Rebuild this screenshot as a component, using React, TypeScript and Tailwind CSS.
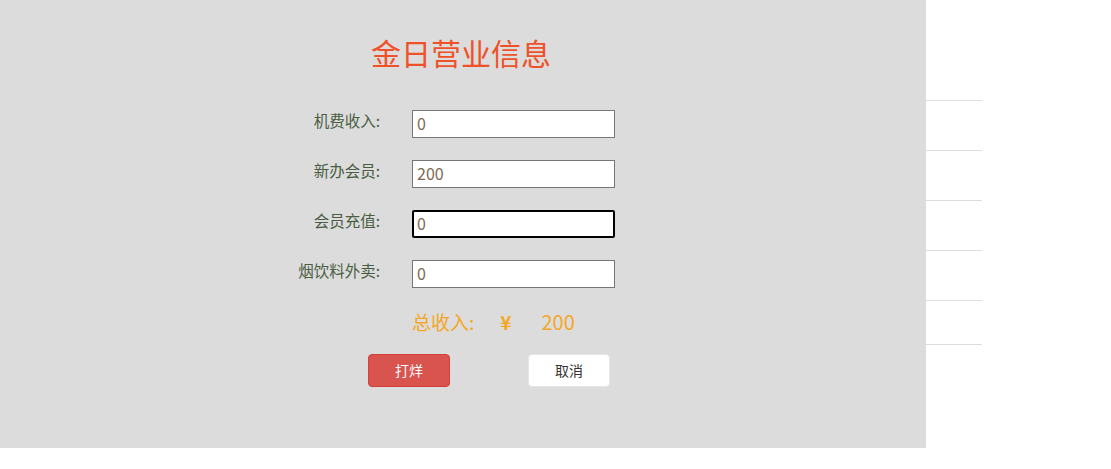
import { useState } from 'react';

const fields = [
  { label: '机费收入:', value: '0' },
  { label: '新办会员:', value: '200' },
  { label: '会员充值:', value: '0', focus: true },
  { label: '烟饮料外卖:', value: '0' },
];

function App() {
  const [form, setForm] = useState(fields.map((f) => f.value));

  return (
    <div
      className="flex w-[1111px] h-[469px] bg-white overflow-hidden"
      style={{ fontFamily: '"Noto Sans CJK SC", "Liberation Sans", sans-serif' }}
    >
      <div className="w-[926px] h-[448px] bg-[#dcdcdc] flex flex-col shrink-0">
        <h1 className="mt-[31px] text-center text-[30px] leading-[42px] text-[#ef5128] pr-[4px]">
          金日营业信息
        </h1>
        <div className="mt-[26px] pl-[280px] flex flex-col">
          {fields.map((f, i) => (
            <div key={f.label} className="flex items-center h-[50px]">
              <label className="w-[100px] text-right text-[15.5px] leading-[20px] text-[#4a5c42] -mt-[8px]">
                {f.label}
              </label>
              <input
                value={form[i]}
                onChange={(e) => {
                  const next = [...form];
                  next[i] = e.target.value;
                  setForm(next);
                }}
                className={
                  f.focus
                    ? 'ml-[32px] w-[203px] h-[28px] bg-white border-2 border-black rounded-[2px] px-[3px] pb-[3px] text-[16px] text-[#7d6a52] outline-none'
                    : 'ml-[32px] w-[203px] h-[28px] bg-white border border-[#767676] px-[4px] pb-[3px] text-[16px] text-[#7d6a52] outline-none'
                }
              />
            </div>
          ))}
          <div className="flex items-center h-[46px] ml-[132px] text-[19px] text-[#f5a623]">
            <span>总收入:</span>
            <span className="ml-[26px] font-bold">¥</span>
            <span className="ml-[30px] text-[20px]">200</span>
          </div>
        </div>
        <div className="mt-[9px] flex pl-[368px]">
          <button
            type="button"
            className="w-[82px] h-[33px] rounded-[4px] bg-[#d9534f] border border-[#d43f3a] text-white text-[14px]"
          >
            打烊
          </button>
          <button
            type="button"
            className="ml-[78px] w-[82px] h-[33px] rounded-[4px] bg-white border border-[#e6e6e6] text-[#333] text-[14px]"
          >
            取消
          </button>
        </div>
      </div>
      <div className="w-[56px] flex flex-col">
        <div className="h-[101px] border-b border-[#dddddd]" />
        <div className="h-[50px] border-b border-[#dddddd]" />
        <div className="h-[50px] border-b border-[#dddddd]" />
        <div className="h-[50px] border-b border-[#dddddd]" />
        <div className="h-[50px] border-b border-[#dddddd]" />
        <div className="h-[44px] border-b border-[#dddddd]" />
      </div>
    </div>
  );
}

export default App;
